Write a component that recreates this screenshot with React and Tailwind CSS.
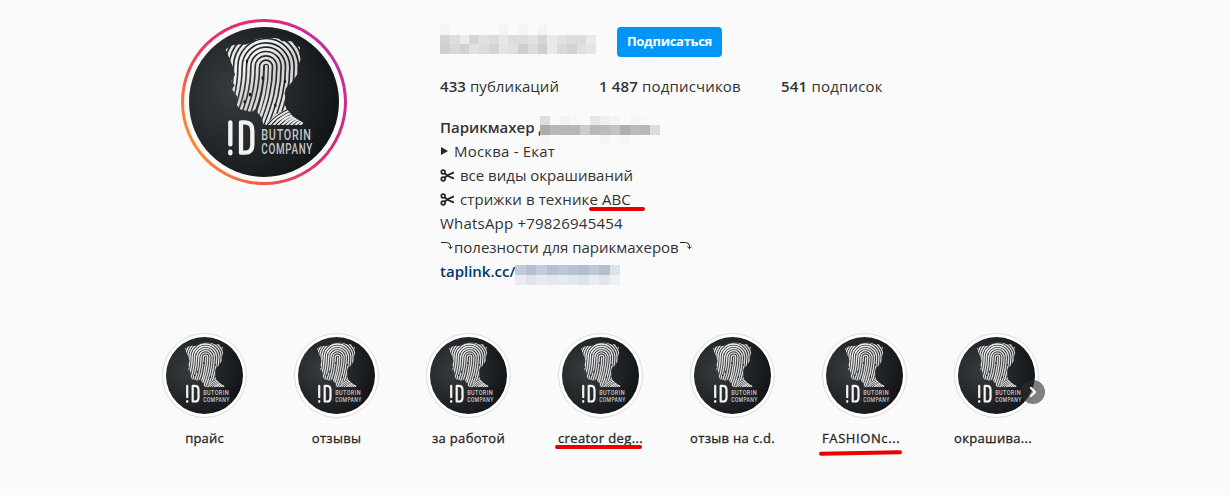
import { ChevronRight } from "lucide-react";

const highlights = [
  { label: "прайс", spacing: "tracking-[0.2px]" },
  { label: "отзывы", spacing: "tracking-[0.3px]" },
  { label: "за работой", spacing: "tracking-[0.33px]" },
  { label: "creator deg...", spacing: "tracking-[0.38px]", mark: "left" },
  { label: "отзыв на c.d.", spacing: "tracking-[0.3px]" },
  { label: "FASHIONс...", spacing: "self-start tracking-[0.6px]", mark: "slant" },
  { label: "окрашива...", spacing: "self-start tracking-[0.33px]", next: true },
];

const nameMosaic = [
  ["#f4f4f4", "", "", "", "", "", "#f4f4f4", "", "#f4f4f4", "", "#f4f4f4", "", "", "", "", ""],
  ["#d4d4d4", "#dedede", "#ececec", "#d5d5d5", "#e1e1e1", "#dcdcdc", "#e8e8e8", "#dcdcdc", "#dcdcdc", "#e2e2e2", "#d6d6d6", "#e9e9e9", "#e2e2e2", "#dcdcdc", "#dcdcdc", "#e9e9e9"],
  ["#d0d0d0", "#d8d8d8", "#d1d1d1", "#e1e1e1", "#dcdcdc", "#d4d4d4", "#e5e5e5", "#e0e0e0", "#cfcfcf", "#dcdcdc", "#cfcfcf", "#e9e9e9", "#d9d9d9", "#d2d2d2", "#e0e0e0", "#e5e5e5"],
];

const titleMosaic = [
  ["#dddddd", "", "#f2f2f2", "#f7f7f7", "", "#e6e6e6", "#f0f0f0", "#f5f5f5", "", "#f5f5f5", "#f8f8f8", ""],
  ["#acacac", "#b8b8b8", "#b6b6b6", "#b6b6b6", "#cccccc", "#b8b8b8", "#bcbcbc", "#c4c4c4", "#b0b0b0", "#bababa", "#b8b8b8", "#dcdcdc"],
  ["#f5f5f5", "", "", "", "", "", "#f4f4f4", "", "#f5f5f5", "", "", ""],
];

const linkMosaic = [
  ["#c0ccd9", "#b3c1d1", "#c1cdd9", "#b3c1d0", "#bac7d4", "#b5c2d1", "#b0bfcf", "#bcc8d6", "#b2c0cf", "#dbe2e9"],
  ["#e9edf1", "#dfe5eb", "#e7ebf0", "#e3e8ed", "#e6eaef", "#e3e8ed", "#dce3ea", "#e9edf1", "#e1e6ec", "#eef1f4"],
];

function Mosaic({ rows, cell }) {
  return (
    <div>
      {rows.map((row, y) => (
        <div key={y} className="flex">
          {row.map((color, x) => (
            <span key={x} className={cell} style={{ backgroundColor: color || "#fafafa" }} />
          ))}
        </div>
      ))}
    </div>
  );
}

const radii = [13, 26, 39, 52, 65, 78, 91, 104, 117, 130, 143];

function Logo({ id, className }) {
  return (
    <svg viewBox="39 39 450 450" className={className}>
      <defs>
        <radialGradient id={`bg-${id}`} cx="0.3" cy="0.42" r="0.7">
          <stop offset="0" stopColor="#363b3d" />
          <stop offset="0.5" stopColor="#25292b" />
          <stop offset="1" stopColor="#121618" />
        </radialGradient>
        <linearGradient id={`ink-${id}`} x1="150" y1="72" x2="380" y2="332" gradientUnits="userSpaceOnUse">
          <stop offset="0" stopColor="#d8d8d8" />
          <stop offset="0.25" stopColor="#f6f6f6" />
          <stop offset="0.5" stopColor="#d2d0d2" />
          <stop offset="1" stopColor="#f4f4f4" />
        </linearGradient>
        <clipPath id={`disc-${id}`}>
          <circle cx="264" cy="264" r="225" />
        </clipPath>
        <clipPath id={`head-${id}`}>
          <path d="M149 106 L170 94 Q195 88 208 92 L220 88 Q235 84 240 76 Q270 68 308 74 L318 82 L352 82 L355 94 L372 99 L370 120 L374 136 L364 160 L366 178 L348 204 L330 222 L326 238 L329 258 L326 272 L334 288 L308 304 L286 332 L262 332 L258 312 L246 298 L240 285 L226 294 L192 286 L182 272 L184 248 L168 226 L176 214 L166 202 L177 182 L171 160 L163 140 Z" />
        </clipPath>
        <clipPath id={`neck-${id}`}>
          <path d="M333 286 L352 308 L382 326 L380 333 L268 333 L300 300 Z" />
        </clipPath>
      </defs>
      <g clipPath={`url(#disc-${id})`}>
        <rect x="39" y="39" width="450" height="450" fill={`url(#bg-${id})`} />
        <g clipPath={`url(#head-${id})`} fill="none" stroke={`url(#ink-${id})`} strokeWidth="8">
          <path d="M271 154 C272 210 262 260 232 340" />
          {radii.map((r) => (
            <path
              key={r}
              d={`M${226 - r} 345 C${252 - r} 275 ${270 - r} 230 ${270 - r} 158 A${r} ${r} 0 0 1 ${270 + r} 158 C${270 + r} 215 ${260 + r} 265 ${226 + r} 345`}
            />
          ))}
        </g>
        <g clipPath={`url(#neck-${id})`}>
          <rect x="260" y="280" width="130" height="60" fill="#17191b" />
          <g fill="none" stroke="#e6e6e6" strokeWidth="6.5">
            {[0, 1, 2, 3, 4, 5, 6, 7, 8].map((i) => (
              <path key={i} d={`M${262 + i * 13} 340 Q${286 + i * 13} 305 ${336 + i * 12} ${280 + i * 6}`} />
            ))}
          </g>
        </g>
        <g stroke="#17191b" strokeWidth="7" strokeLinecap="round">
          <path d="M213 140 v4 M260 190 v4 M222 240 v4 M327 200 v4 M298 272 v4 M206 262 v3" />
        </g>
        <g fill="none" stroke="#f3f3f3" strokeWidth="13" strokeLinecap="round">
          <path d="M163 325 V391" />
          <path d="M163 413 V418" />
          <path d="M195 325 V416 H207 Q229 416 229 392 V350 Q229 325 207 325 Z" strokeLinejoin="round" />
        </g>
        <g fill="#c6c6c6" fontFamily="Roboto, 'Liberation Sans', sans-serif" fontSize="42" fontWeight="500" letterSpacing="3">
          <text x="256" y="377" textLength="151" lengthAdjust="spacingAndGlyphs">BUTORIN</text>
          <text x="256" y="420" textLength="155" lengthAdjust="spacingAndGlyphs">COMPANY</text>
        </g>
      </g>
    </svg>
  );
}

function Scissors() {
  return (
    <svg viewBox="0 0 14 13" className="h-[13px] w-[14px]" fill="none" stroke="#262626">
      <circle cx="3.2" cy="3" r="1.9" strokeWidth="1.7" />
      <circle cx="3.2" cy="10" r="1.9" strokeWidth="1.7" />
      <path d="M4.6 4.2 L8 7 L14 9.6 M4.6 8.8 L8 6 L14 3.4" strokeWidth="1.8" />
    </svg>
  );
}

function HookArrow() {
  return (
    <svg viewBox="0 0 14 9" className="mb-1 h-[9px] w-[14px]" fill="none" stroke="#262626">
      <path d="M1 1.5 H6.5 Q10.5 1.5 10.5 5 V7.5 M8.3 5.5 L10.5 7.7 L12.7 5.5" />
    </svg>
  );
}

function Highlight({ item, id }) {
  return (
    <div className="relative flex w-[85px] flex-col items-center">
      <div className="flex size-[85px] items-center justify-center rounded-full border border-[#dbdbdb] bg-white">
        <Logo id={id} className="size-[77px]" />
      </div>
      <span className={`mt-[10px] text-[13px] leading-5 whitespace-nowrap text-[#262626] [-webkit-text-stroke:0.3px] ${item.spacing}`}>
        {item.label}
      </span>
      {item.mark === "left" && <span className="absolute top-[112px] -left-[3px] h-1 w-[87px] rounded-full bg-[#e60000]" />}
      {item.mark === "slant" && (
        <span className="absolute top-[118px] -left-[3px] h-1 w-[83px] -rotate-1 rounded-full bg-[#e60000]" />
      )}
      {item.next && (
        <button className="absolute top-[47px] left-[67px] flex size-6 items-center justify-center rounded-full bg-[#2e2e2e]/60">
          <ChevronRight className="size-4 text-white" strokeWidth={3.5} />
        </button>
      )}
    </div>
  );
}

export default function App() {
  return (
    <div className="h-[495px] w-[1231px] overflow-hidden bg-[#fafafa] font-['Open_Sans','Noto_Sans',sans-serif] text-[#333]">
      <header className="flex pt-[19px] pl-[181px]">
        <div className="flex size-[166px] items-center justify-center rounded-full bg-[conic-gradient(from_0deg,#d92b7f,#c32aa3_12%,#c72d90_25%,#d62976_35%,#e8485c_46%,#f56a3c_54%,#fa8b34_66%,#f77f38_74%,#e84a55_83%,#e02f6c_92%,#d92b7f)]">
          <div className="flex size-[160px] items-center justify-center rounded-full bg-[#fafafa]">
            <Logo id="main" className="size-[150px]" />
          </div>
        </div>

        <div className="ml-[93px]">
          <div className="flex pt-[6px]">
            <Mosaic rows={nameMosaic} cell="h-[9.67px] w-[9.75px]" />
            <button className="mt-[2px] ml-[21px] flex h-[30px] w-[105px] items-center justify-center rounded bg-[#0095f6] text-[13px] font-bold tracking-[-0.3px] text-white">
              Подписаться
            </button>
          </div>

          <ul className="mt-[17px] flex text-[15px] leading-6">
            <li className="w-[159px] tracking-[0.07px]"><b className="font-semibold">433</b> публикаций</li>
            <li className="w-[182px] tracking-[0.16px]"><b className="font-semibold">1 487</b> подписчиков</li>
            <li className="tracking-[0.2px]"><b className="font-semibold">541</b> подписок</li>
          </ul>

          <div className="mt-[17px] text-[15px] leading-6 whitespace-nowrap">
            <div className="flex h-6">
              <h1 className="w-[100px] font-semibold">Парикмахер д</h1>
              <div className="pt-px">
                <Mosaic rows={titleMosaic} cell="h-[9.33px] w-[10px]" />
              </div>
            </div>
            <div className="flex h-6 items-center gap-1.5 tracking-[0.2px]">
              <svg viewBox="0 0 8 8" className="size-2 fill-[#262626]"><path d="M1 0 L8 4 L1 8 Z" /></svg>
              <span>Москва - Екат</span>
            </div>
            <div className="flex h-6 items-center gap-1.5">
              <Scissors />
              <span>все виды окрашиваний</span>
            </div>
            <div className="relative flex h-6 items-center gap-1.5 tracking-[0.1px]">
              <Scissors />
              <span>стрижки в технике АВС</span>
              <span className="absolute top-5 left-[149px] h-1 w-14 rounded-full bg-[#e60000]" />
            </div>
            <p className="tracking-[0.2px]">WhatsApp +79826945454</p>
            <div className="flex h-6 items-center">
              <HookArrow />
              <span>полезности для парикмахеров</span>
              <HookArrow />
            </div>
            <div className="flex h-6">
              <a className="w-[75px] font-semibold text-[#00376b]">taplink.cc/</a>
              <div className="pt-[6px]">
                <Mosaic rows={linkMosaic} cell="h-[10px] w-[10.5px]" />
              </div>
            </div>
          </div>
        </div>
      </header>

      <section className="mt-[50px] flex gap-[47px] pl-[162px]">
        {highlights.map((item, i) => (
          <Highlight key={item.label} item={item} id={`h${i}`} />
        ))}
      </section>
    </div>
  );
}
